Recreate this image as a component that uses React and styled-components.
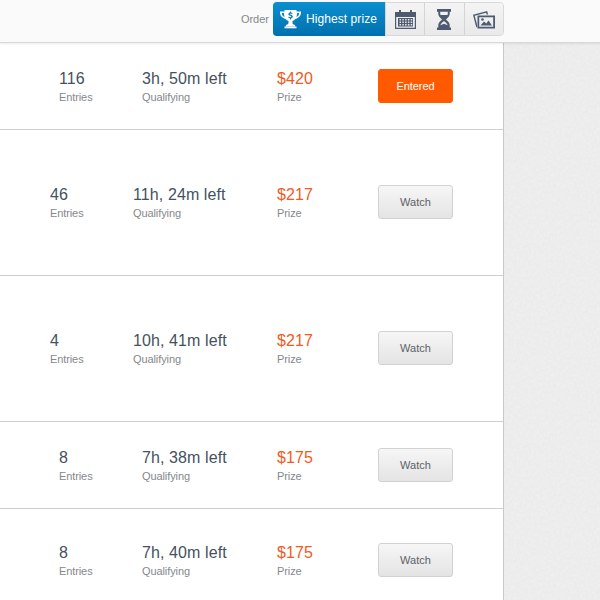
import React from "react";
import styled, { createGlobalStyle } from "styled-components";

const noise = encodeURIComponent(
  `<svg xmlns="http://www.w3.org/2000/svg" width="200" height="200"><filter id="n"><feTurbulence type="fractalNoise" baseFrequency="0.35" numOctaves="2" stitchTiles="stitch"/><feColorMatrix values="0 0 0 0 0.55 0 0 0 0 0.55 0 0 0 0 0.55 0.18 0 0 0 0"/></filter><rect width="200" height="200" filter="url(#n)"/></svg>`
);

const GlobalStyle = createGlobalStyle`
  html, body {
    margin: 0;
    height: 600px;
    overflow: hidden;
    background-color: #f1f1f1;
    background-image: url("data:image/svg+xml,${noise}");
    font-family: "Liberation Sans", Arial, sans-serif;
  }
`;

const TopBar = styled.div`
  background: #fafafa;
  border-bottom: 1px solid #d8d8d8;
  box-shadow: 0 1px 2px rgba(0, 0, 0, 0.08);
  box-sizing: border-box;
  display: flex;
  height: 43px;
  padding: 2px 96px 0 0;
  justify-content: flex-end;
  position: relative;
`;

const OrderLabel = styled.span`
  color: #85888c;
  font-size: 11px;
  line-height: 34px;
  margin-right: 4px;
`;

const Segments = styled.div`
  border: 1px solid #d9d9d9;
  border-radius: 4px;
  box-sizing: border-box;
  display: flex;
  height: 34px;
  width: 231px;
`;

const Segment = styled.div`
  align-items: center;
  background: linear-gradient(#f4f4f4, #e9e9e9);
  border-left: 1px solid #d4d4d4;
  display: flex;
  flex: 1;
  justify-content: center;

  &:last-child {
    border-radius: 0 4px 4px 0;
  }
`;

const ActiveSegment = styled.div`
  align-items: center;
  background: linear-gradient(#0b8fd0, #0070ae);
  border-radius: 4px 0 0 4px;
  box-sizing: border-box;
  color: #fff;
  display: flex;
  font-size: 12px;
  gap: 4px;
  letter-spacing: 0.07px;
  margin: -1px 0 -1px -1px;
  padding-left: 6px;
  width: 112px;
`;

const List = styled.div`
  background: #fff;
  border-right: 1px solid #c8c8c8;
  width: 503px;
`;

const Row = styled.div`
  align-items: center;
  border-bottom: 1px solid #cfcfcf;
  box-sizing: border-box;
  display: flex;
  height: ${(p) => p.$height}px;
  padding-left: ${(p) => (p.$tall ? 50 : 59)}px;
`;

const Cell = styled.div`
  margin-top: ${(p) => (p.$tall ? 0 : 2)}px;
`;

const EntriesCell = styled(Cell)`
  width: 83px;
`;

const TimeCell = styled(Cell)`
  width: ${(p) => (p.$tall ? 144 : 135)}px;
`;

const PrizeCell = styled(Cell)`
  width: 101px;
`;

const Value = styled.div`
  color: ${(p) => (p.$prize ? "#f15a22" : "#44525f")};
  font-size: 16px;
  letter-spacing: 0.1px;
  line-height: 20px;
`;

const Caption = styled.div`
  color: #85888c;
  font-size: 11px;
  letter-spacing: -0.1px;
  line-height: 15px;
  margin-top: 1px;
`;

const WatchButton = styled.div`
  background: linear-gradient(#f6f6f6, #e4e4e4);
  border: 1px solid #d2d2d2;
  border-radius: 3px;
  box-sizing: border-box;
  color: #5c6268;
  font-size: 11px;
  height: 34px;
  line-height: 32px;
  margin-bottom: ${(p) => (p.$tall ? 2 : 0)}px;
  text-align: center;
  width: 75px;
`;

const EnteredButton = styled(WatchButton)`
  background: #ff5a00;
  border-color: #ff5a00;
  color: #fff;
  letter-spacing: -0.05px;
`;

const Icon = styled.svg`
  display: block;
  fill: ${(p) => p.$fill || "#4d5a70"};
`;

const Trophy = () => (
  <Icon $fill="#fff" width="23" height="20" viewBox="0 0 22 20">
    <path
      fillRule="evenodd"
      d="M5 1h12v1.500h4.500c.3 3.600-1.600 6.400-5.600 7.500-.8 1-1.700 1.600-2.900 1.900V14c0 1.200 1.200 1.800 2.600 2v1.500H6.400V16c1.400-.2 2.600-.8 2.600-2v-2.100C7.800 11.600 6.900 11 6.100 10 2.100 8.900.2 6.100.5 2.500H5V1zM2.300 4c.1 1.800 1 3.300 2.800 4.100C4.700 6.900 4.500 5.500 4.400 4H2.300zm17.400 0h-2.100c-.1 1.500-.3 2.900-.7 4.100 1.800-.8 2.700-2.300 2.800-4.100z"
    />
    <rect x="5" y="17.500" width="12" height="1.800" />
    <path
      fill="#0a82c2"
      d="M11.500 2.500v1c.7.100 1.200.3 1.600.6l-.6 1c-.4-.3-.8-.4-1.300-.4-.4 0-.7.100-.7.400 0 .8 2.800.6 2.800 2.600 0 .9-.7 1.500-1.800 1.700v1h-1v-1c-.7-.1-1.300-.4-1.800-.8l.7-1c.4.400.9.600 1.500.6.500 0 .8-.2.800-.5 0-.9-2.800-.6-2.800-2.600 0-.9.700-1.400 1.600-1.600v-1h1z"
    />
  </Icon>
);

const Calendar = () => (
  <Icon width="21" height="19" viewBox="0 0 21 19">
    <path
      fillRule="evenodd"
      d="M0 2h4V0h2v2h9V0h2v2h4v17H0V2zm1.200 5v10.800h18.600V7H1.200z"
    />
    <path d="M3 8h15v8.500H3z" />
    <path
      fill="#e6e7ea"
      d="M4.500 9h1.500v1.500H4.500zM7.300 9h1.500v1.500H7.300zM10.100 9h1.500v1.500h-1.500zM12.900 9h1.500v1.500h-1.500zM15.700 9h1.500v1.500h-1.500zM4.500 11.500h1.500V13H4.500zM7.300 11.500h1.500V13H7.300zM10.100 11.500h1.500V13h-1.500zM12.900 11.500h1.500V13h-1.500zM15.700 11.500h1.500V13h-1.500zM4.500 14h1.500v1.500H4.500zM7.300 14h1.500v1.500H7.300zM10.100 14h1.500v1.500h-1.500zM12.900 14h1.500v1.500h-1.500zM15.700 14h1.500v1.500h-1.500z"
    />
  </Icon>
);

const Hourglass = () => (
  <Icon width="14" height="21" viewBox="0 0 13 20" preserveAspectRatio="none">
    <path
      fillRule="evenodd"
      d="M0 0h13v2.500h-1.200v2.300c0 2.100-1.900 3.600-3.500 5.200 1.600 1.600 3.500 3.100 3.500 5.200v2.300H13V20H0v-2.500h1.200v-2.300c0-2.100 1.900-3.600 3.500-5.200C3.100 8.400 1.200 6.900 1.200 4.800V2.500H0V0zm3 2.500v2.300c0 .4.100.7.300 1h6.400c.2-.3.300-.6.300-1V2.500H3zM6.500 11.500C5 12.900 3.500 14 3.200 15.500l3.300-1.500 3.300 1.500c-.3-1.500-1.800-2.600-3.300-4z"
    />
  </Icon>
);

const Photos = () => (
  <Icon width="22" height="19" viewBox="0 0 22 19">
    <path
      fillRule="evenodd"
      d="M0 4.800 14.200 1l.9 3.400h-1.500l-.5-1.700L1.700 5.800l2.300 8.400v3.300L3.200 17 0 4.800z"
    />
    <path
      fillRule="evenodd"
      d="M4.500 5.500h17.500v13H4.500v-13zm1.700 1.700v9.600h14V7.200h-14z"
    />
    <path d="M7.500 15.500l3.500-4 2.300 2 2.200-3 3.500 5H7.500z" />
    <circle cx="9.500" cy="9.500" r="1.300" />
  </Icon>
);

const rows = [
  { entries: "116", time: "3h, 50m left", prize: "$420", height: 87, entered: true },
  { entries: "46", time: "11h, 24m left", prize: "$217", height: 146, tall: true },
  { entries: "4", time: "10h, 41m left", prize: "$217", height: 146, tall: true },
  { entries: "8", time: "7h, 38m left", prize: "$175", height: 87 },
  { entries: "8", time: "7h, 40m left", prize: "$175", height: 103 },
];

export default function App() {
  return (
    <>
      <GlobalStyle />
      <TopBar>
        <OrderLabel>Order</OrderLabel>
        <Segments>
          <ActiveSegment>
            <Trophy />
            Highest prize
          </ActiveSegment>
          <Segment>
            <Calendar />
          </Segment>
          <Segment>
            <Hourglass />
          </Segment>
          <Segment>
            <Photos />
          </Segment>
        </Segments>
      </TopBar>
      <List>
        {rows.map((row, index) => (
          <Row key={index} $height={row.height} $tall={row.tall}>
            <EntriesCell $tall={row.tall}>
              <Value>{row.entries}</Value>
              <Caption>Entries</Caption>
            </EntriesCell>
            <TimeCell $tall={row.tall}>
              <Value>{row.time}</Value>
              <Caption>Qualifying</Caption>
            </TimeCell>
            <PrizeCell $tall={row.tall}>
              <Value $prize>{row.prize}</Value>
              <Caption>Prize</Caption>
            </PrizeCell>
            {row.entered ? (
              <EnteredButton>Entered</EnteredButton>
            ) : (
              <WatchButton $tall={row.tall}>Watch</WatchButton>
            )}
          </Row>
        ))}
      </List>
    </>
  );
}
